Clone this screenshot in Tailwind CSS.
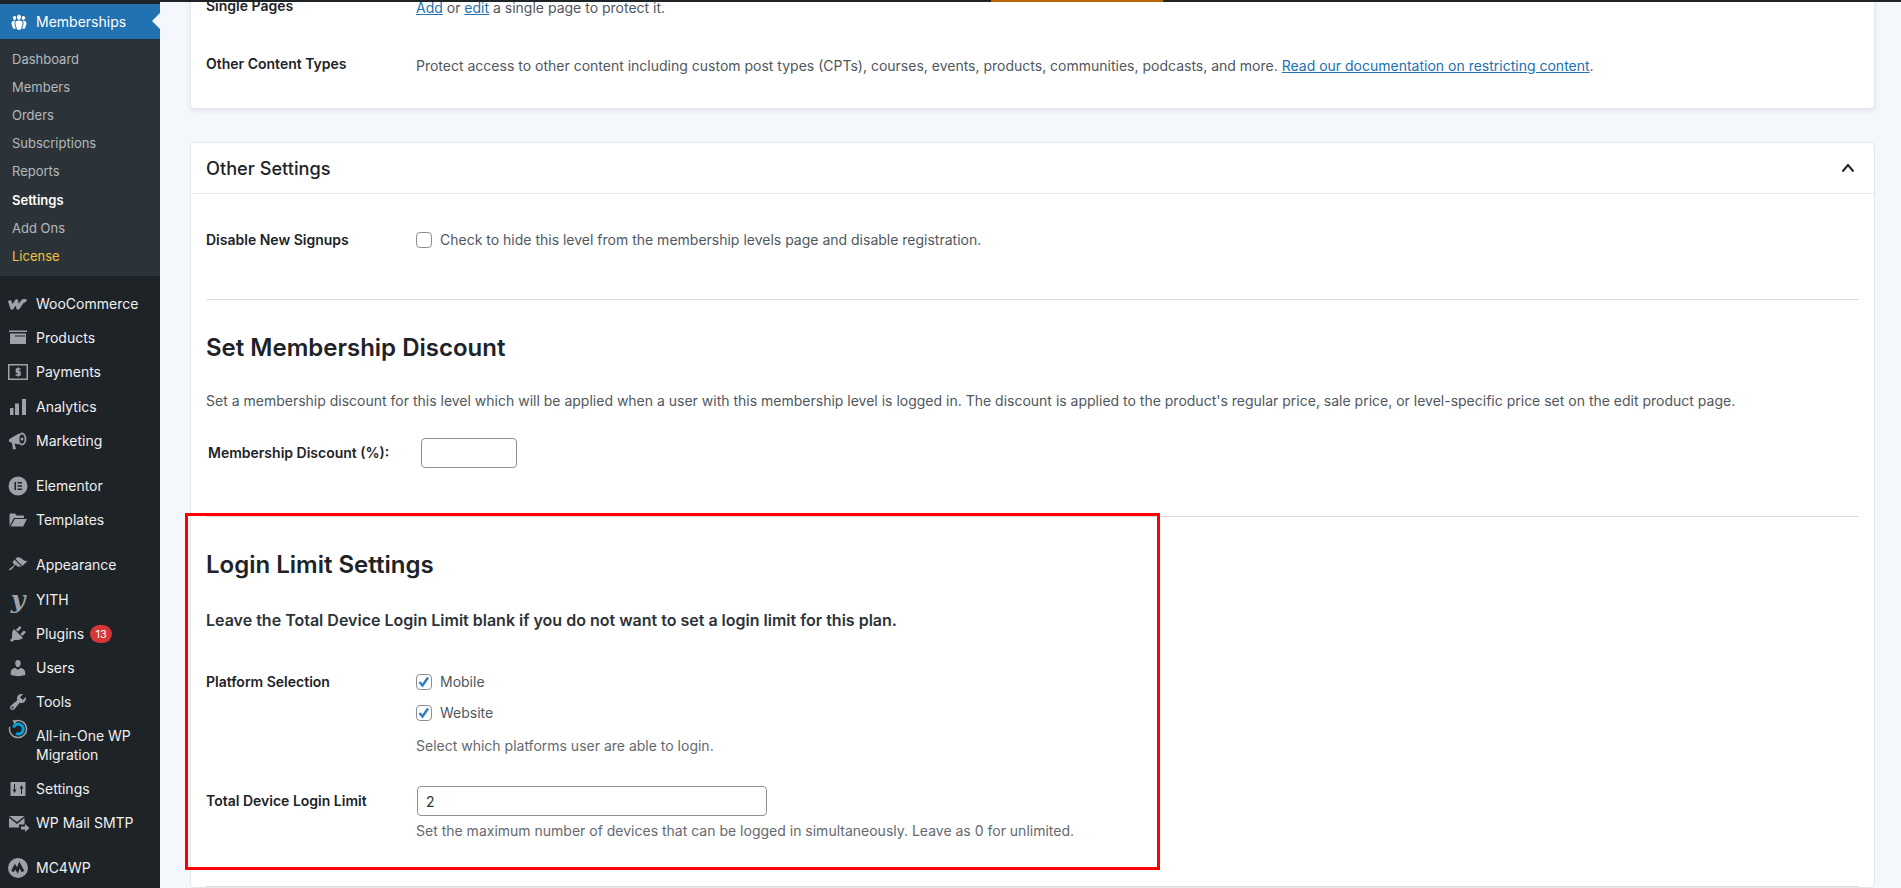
<!DOCTYPE html>
<html lang="en">

<head>
  <meta charset="UTF-8" />
  <meta name="viewport" content="width=device-width, initial-scale=1.0" />
  <script src="https://cdn.jsdelivr.net/npm/@tailwindcss/browser@4"></script>
  <title>Membership Level Settings</title>
</head>

<body class="relative h-[888px] overflow-hidden bg-[#f4f7fb] font-[Inter,sans-serif] text-[14px] leading-5 text-[#50575e]">
  <div class="flex h-[888px]">
    <!-- Admin menu -->
    <aside class="w-[160px] shrink-0 bg-[#1d2327] pt-1 text-[#f0f0f1]">
      <a class="relative flex h-[35px] items-center bg-[#2271b1] text-white">
        <span class="flex w-9 justify-center pl-[1px]">
          <svg class="h-[20px] w-[20px]" viewBox="0 0 20 20" fill="currentColor"><path d="M8.03 4.46c-.29 1.28.55 3.46 1.97 3.46 1.41 0 2.25-2.18 1.96-3.46-.22-.98-1.08-1.63-1.96-1.63-.89 0-1.74.65-1.97 1.63zm-4.13.9c-.25 1.08.47 2.93 1.67 2.93s1.92-1.85 1.67-2.93c-.19-.83-.92-1.39-1.67-1.39s-1.48.56-1.67 1.39zm8.86 0c-.25 1.08.47 2.93 1.66 2.93 1.2 0 1.92-1.85 1.67-2.93-.19-.83-.92-1.39-1.67-1.39-.74 0-1.47.56-1.66 1.39zm-.59 11.43l1.25-4.3C14.2 10 12.71 8.47 10 8.47c-2.72 0-4.21 1.53-3.44 4.02l1.26 4.3C8.05 17.51 9 18 10 18c.98 0 1.94-.49 2.17-1.21zm-6.1-7.63c-.49.67-.96 1.83-.42 3.59l1.12 3.79c-.34.2-.77.31-1.2.31-.85 0-1.65-.41-1.85-1.03l-1.07-3.65c-.65-2.11.61-3.4 2.92-3.4.27 0 .54.02.79.06-.1.1-.2.22-.29.33zm8.35-.39c2.31 0 3.58 1.29 2.92 3.4l-1.07 3.65c-.2.62-1 1.03-1.85 1.03-.43 0-.86-.11-1.2-.31l1.11-3.77c.55-1.78.08-2.94-.42-3.61-.08-.11-.18-.23-.28-.33.25-.04.51-.06.79-.06z"/></svg>
        </span>
        <span>Memberships</span>
        <span class="absolute right-0 top-[9px] h-0 w-0 border-y-[8px] border-r-[8px] border-y-transparent border-r-[#f4f7fb]"></span>
      </a>
      <ul class="bg-[#2c3338] py-[6px] text-[13px] text-[#b4b9be]">
        <li class="flex h-[28px] items-center pl-3">Dashboard</li>
        <li class="flex h-[28px] items-center pl-3">Members</li>
        <li class="flex h-[28px] items-center pl-3">Orders</li>
        <li class="flex h-[28px] items-center pl-3">Subscriptions</li>
        <li class="flex h-[28px] items-center pl-3">Reports</li>
        <li class="flex h-[29px] items-center pl-3 font-semibold text-white">Settings</li>
        <li class="flex h-[28px] items-center pl-3">Add Ons</li>
        <li class="flex h-[28px] items-center pl-3 text-[#f0c33c]">License</li>
      </ul>

      <ul class="mt-[11px] text-[#f0f0f1]">
        <li class="flex h-[34px] items-center">
          <span class="flex w-9 justify-center text-[#9ca2a7]">
            <svg class="h-[11px] w-[20px]" viewBox="0 0 20 11" fill="none" stroke="currentColor" stroke-width="3.400" stroke-linejoin="round"><path d="M1.500 1.500l2.500 7.500 4.500-7 1.500 7 4.500-6.500c1-1 2.500-1 3.500 0" /></svg>
          </span>
          <span>WooCommerce</span>
        </li>
        <li class="flex h-[34px] items-center">
          <span class="flex w-9 justify-center text-[#9ca2a7]">
            <svg class="h-[20px] w-[20px]" viewBox="0 0 20 20" fill="currentColor"><path d="M1 2.500h18v1.500H1zM2 5.500h16V16H2zm5 2v1h10V7.500z" fill-rule="evenodd" /></svg>
          </span>
          <span>Products</span>
        </li>
        <li class="flex h-[34px] items-center">
          <span class="flex w-9 justify-center text-[#9ca2a7]">
            <svg class="h-[20px] w-[20px]" viewBox="0 0 20 20" fill="none" stroke="currentColor"><rect x="0.750" y="2.750" width="18.500" height="14.500" stroke-width="1.500" /><path stroke-width="1.600" d="M12.500 7H8.500v3h3.500v3H7.500M10.200 5.500v9" /></svg>
          </span>
          <span>Payments</span>
        </li>
        <li class="flex h-[35px] items-center">
          <span class="flex w-9 justify-center text-[#9ca2a7]">
            <svg class="h-[20px] w-[20px]" viewBox="0 0 20 20" fill="currentColor"><path d="M2 11h3.500v7H2zM7 6.500h4V18H7zM14 2h4v16h-4z" /></svg>
          </span>
          <span>Analytics</span>
        </li>
        <li class="flex h-[34px] items-center">
          <span class="flex w-9 justify-center text-[#9ca2a7]">
            <svg class="h-[20px] w-[20px]" viewBox="0 0 20 20" fill="currentColor"><path d="M1 8.500L3 7l8-4.500v11L6.500 12.500 8 18l-3 .5-1-6.500-3-1.500z" /><ellipse cx="14" cy="8" rx="3.500" ry="5.500" fill="none" stroke="currentColor" stroke-width="1.800" /><circle cx="14" cy="8" r="1.500" /></svg>
          </span>
          <span>Marketing</span>
        </li>
      </ul>

      <ul class="mt-[11px]">
        <li class="flex h-[34px] items-center">
          <span class="flex w-9 justify-center text-[#9ca2a7]">
            <svg class="h-[20px] w-[20px]" viewBox="0 0 20 20" fill="currentColor"><path fill-rule="evenodd" d="M10 .5a9.500 9.500 0 1 1 0 19 9.500 9.500 0 0 1 0-19zM6.500 6v8H8V6zm3 0v1.500h4.500V6zm0 3.250v1.500h4.500v-1.500zm0 3.250V14h4.500v-1.500z" /></svg>
          </span>
          <span>Elementor</span>
        </li>
        <li class="flex h-[34px] items-center">
          <span class="flex w-9 justify-center text-[#9ca2a7]">
            <svg class="h-[20px] w-[20px]" viewBox="0 0 20 20" fill="currentColor"><path d="M1.500 16V4.500c0-.5.500-1 1-1h4.500l1.500 2H15c.5 0 1 .5 1 1V8H6L1.500 16z M6.800 9H19l-3.800 7.500H2.500z" /></svg>
          </span>
          <span>Templates</span>
        </li>
      </ul>

      <ul class="mt-[10px]">
        <li class="flex h-[35px] items-center">
          <span class="flex w-9 justify-center text-[#9ca2a7]">
            <svg class="h-[20px] w-[20px]" viewBox="0 0 20 20" fill="currentColor"><path d="M14.480 11.060L7.410 3.990l1.500-1.500c.5-.56 2.300-.47 3.510.32 1.210.8 1.430 1.280 2.910 2.100 1.180.64 2.450 1.260 4.450.85zm-.71.71L6.700 4.700 4.930 6.470c-.39.39-.39 1.020 0 1.410l1.060 1.060c.39.39.39 1.030 0 1.420-.6.6-1.430 1.110-2.210 1.690-.35.26-.7.53-1.010.84C1.430 13.230.65 14.440 1.270 15.060c.61.62 1.830-.16 3.170-1.500.3-.3.58-.65.84-1 .58-.78 1.090-1.610 1.690-2.210.39-.39 1.020-.39 1.410 0l1.060 1.060c.39.39 1.020.39 1.410 0z" /></svg>
          </span>
          <span>Appearance</span>
        </li>
        <li class="flex h-[35px] items-center">
          <span class="flex w-9 justify-center font-['DejaVu_Serif',serif] text-[25px] font-bold italic leading-none text-[#9ca2a7]">y</span>
          <span>YITH</span>
        </li>
        <li class="flex h-[34px] items-center">
          <span class="flex w-9 justify-center text-[#9ca2a7]">
            <svg class="h-[20px] w-[20px]" viewBox="0 0 20 20" fill="currentColor"><path d="M13.110 4.360L9.870 7.600 8 5.730l3.240-3.240c.35-.34 1.050-.2 1.560.32.52.51.66 1.210.31 1.550zm-8 1.770l.91-1.120 9.010 9.010-1.190.84c-.71.71-2.630 1.160-3.820 1.160H6.140L4.900 17.260c-.59.59-1.540.59-2.120 0-.59-.58-.59-1.530 0-2.120l1.240-1.240v-3.880c0-1.130.4-3.190 1.090-3.890zm7.260 3.970l3.240-3.240c.34-.35 1.040-.21 1.550.31.52.51.66 1.210.31 1.550l-3.240 3.250z" /></svg>
          </span>
          <span>Plugins</span>
          <span class="ml-[6px] flex h-[18px] min-w-[22px] items-center justify-center rounded-full bg-[#d63638] px-[5px] text-[11px] text-white">13</span>
        </li>
        <li class="flex h-[34px] items-center">
          <span class="flex w-9 justify-center text-[#9ca2a7]">
            <svg class="h-[20px] w-[20px]" viewBox="0 0 20 20" fill="currentColor"><path d="M10 9.250c-2.270 0-2.730-3.440-2.730-3.440C7 4.020 7.820 2 9.970 2c2.160 0 2.980 2.020 2.710 3.810 0 0-.41 3.440-2.680 3.440zm0 2.570L12.720 10c2.390 0 4.520 2.330 4.520 4.530v2.490s-3.650 1.130-7.240 1.130c-3.650 0-7.240-1.130-7.240-1.130v-2.490c0-2.250 1.940-4.480 4.470-4.480z" /></svg>
          </span>
          <span>Users</span>
        </li>
        <li class="flex h-[34px] items-center">
          <span class="flex w-9 justify-center text-[#9ca2a7]">
            <svg class="h-[20px] w-[20px]" viewBox="0 0 20 20" fill="currentColor"><path d="M16.680 9.770c-1.340 1.340-3.300 1.670-4.950.99l-5.410 6.520c-.99.99-2.590.99-3.580 0s-.99-2.590 0-3.570l6.520-5.420c-.68-1.650-.35-3.610.99-4.950 1.280-1.280 3.120-1.620 4.720-1.060l-2.890 2.890 2.820 2.820 2.860-2.870c.53 1.580.18 3.390-1.080 4.650zM3.810 16.210c.4.39 1.040.39 1.430 0 .4-.4.4-1.040 0-1.430-.39-.4-1.030-.4-1.430 0-.39.39-.39 1.030 0 1.430z" /></svg>
          </span>
          <span>Tools</span>
        </li>
        <li class="flex h-[53px] items-start pt-[7px]">
          <span class="flex w-9 justify-center -mt-[7px]">
            <svg class="h-[20px] w-[20px]" viewBox="0 0 20 20" fill="none"><path d="M7.500 2A8.500 8.500 0 1 1 1.800 8" stroke="#9ca2a7" stroke-width="1.500" /><path d="M4.500 1l4.500.5-2.500 4z" fill="#9ca2a7" /><path d="M5.500 8.500A5 5 0 1 1 8 14.500" stroke="#0a9fdb" stroke-width="3" /></svg>
          </span>
          <span class="leading-[19px]">All-in-One WP<br />Migration</span>
        </li>
        <li class="flex h-[34px] items-center">
          <span class="flex w-9 justify-center text-[#9ca2a7]">
            <svg class="h-[20px] w-[20px]" viewBox="0 0 20 20" fill="currentColor"><path fill-rule="evenodd" d="M2.500 3h15v14h-15zM7 5v5.500H8.500L6.500 14l-2-3.500H6V5zM14 15V9.500h1.500l-2-3.500-2 3.500H13V15z" /></svg>
          </span>
          <span>Settings</span>
        </li>
        <li class="flex h-[34px] items-center">
          <span class="flex w-9 justify-center pl-[2px] text-[#9ca2a7]">
            <svg class="h-[20px] w-[22px]" viewBox="0 0 22 20" fill="currentColor"><path d="M1 3h15.500L9 9zM1 4.800V14.500h10v-3h5.500V4.800L9 11zM13 13.500h4V11l4.500 4-4.500 4v-2.500h-4z" /></svg>
          </span>
          <span>WP Mail SMTP</span>
        </li>
      </ul>

      <ul class="mt-[11px]">
        <li class="flex h-[34px] items-center">
          <span class="flex w-9 justify-center text-[#9ca2a7]">
            <svg class="h-[20px] w-[20px]" viewBox="0 0 20 20"><circle cx="10" cy="10" r="10" fill="currentColor" /><path d="M4.500 13.500l2.500-5 2.500 4 2-5.500 3.500 6.500" fill="none" stroke="#1d2327" stroke-width="2.800" /></svg>
          </span>
          <span>MC4WP</span>
        </li>
      </ul>
    </aside>

    <!-- Page content -->
    <main class="min-w-0 flex-1 overflow-hidden pl-[30px] pr-[26px]">
      <section class="-mt-[4px] h-[113px] rounded-b-[4px] border border-t-0 border-[#e3e6ea] bg-white px-[15px] shadow-[0_2px_6px_rgba(0,0,0,0.08)]">
        <div class="flex">
          <div class="w-[210px] font-semibold text-[#1d2327]">Single Pages</div>
          <div class="pt-[2px]"><a class="text-[#2271b1] underline">Add</a> or <a class="text-[#2271b1] underline">edit</a> a single page to protect it.</div>
        </div>
        <div class="mt-[36px] flex">
          <div class="w-[210px] font-semibold text-[#1d2327]">Other Content Types</div>
          <div class="pt-[2px]">Protect access to other content including custom post types (CPTs), courses, events, products, communities, podcasts, and more. <a class="text-[#2271b1] underline">Read our documentation on restricting content</a>.</div>
        </div>
      </section>

      <section class="mt-[33px] rounded-[4px] border border-[#e3e6ea] bg-white">
        <div class="flex h-[51px] items-center justify-between border-b border-[#e3e6ea] pl-[15px] pr-[18px]">
          <h3 class="text-[18.2px] font-medium text-[#1d2327]">Other Settings</h3>
          <svg class="h-[14px] w-[16px]" viewBox="0 0 16 14" fill="none" stroke="#1d2327" stroke-width="2"><path d="M2.500 10.500L8 4l5.500 6.500" /></svg>
        </div>
        <div class="px-[15px]">
          <div class="mt-[38px] flex items-center">
            <div class="w-[210px] font-semibold leading-4 text-[#1d2327]">Disable New Signups</div>
            <span class="h-4 w-4 rounded-[4px] border border-[#8c8f94] bg-white"></span>
            <span class="ml-[8px] leading-4">Check to hide this level from the membership levels page and disable registration.</span>
          </div>

          <hr class="mt-[51px] border-[#dcdcde]" />

          <h2 class="mt-[33px] text-[24px] font-semibold leading-[30px] text-[#1d2327]">Set Membership Discount</h2>
          <p class="mt-[28px]">Set a membership discount for this level which will be applied when a user with this membership level is logged in. The discount is applied to the product's regular price, sale price, or level-specific price set on the edit product page.</p>
          <div class="mt-[27px] flex items-center pl-[2px]">
            <label class="w-[213px] font-semibold text-[#1d2327]">Membership Discount (%):</label>
            <input type="text" class="h-[30px] w-[96px] rounded-[4px] border border-[#8c8f94] bg-white" />
          </div>

          <hr class="mt-[48px] border-[#dcdcde]" />

          <h2 class="mt-[33px] text-[24px] font-semibold leading-[30px] text-[#1d2327]">Login Limit Settings</h2>
          <p class="mt-[30px] text-[16px] font-semibold text-[#2c3338]">Leave the Total Device Login Limit blank if you do not want to set a login limit for this plan.</p>

          <div class="mt-[44px] flex">
            <div class="w-[210px] font-semibold leading-4 text-[#1d2327]">Platform Selection</div>
            <div>
              <label class="flex items-center leading-4">
                <span class="h-4 w-4 rounded-[4px] border border-[#8c8f94] bg-white text-[#2f7fc4]">
                  <svg class="h-[14px] w-[14px]" viewBox="0 0 14 14" fill="none" stroke="currentColor" stroke-width="2.500"><path d="M2.500 7l3 3.500 5.500-8" /></svg>
                </span>
                <span class="ml-[8px]">Mobile</span>
              </label>
              <label class="mt-[15px] flex items-center leading-4">
                <span class="h-4 w-4 rounded-[4px] border border-[#8c8f94] bg-white text-[#2f7fc4]">
                  <svg class="h-[14px] w-[14px]" viewBox="0 0 14 14" fill="none" stroke="currentColor" stroke-width="2.500"><path d="M2.500 7l3 3.500 5.500-8" /></svg>
                </span>
                <span class="ml-[8px]">Website</span>
              </label>
              <p class="mt-[15px] text-[#646970]">Select which platforms user are able to login.</p>
            </div>
          </div>

          <div class="mt-[30px] flex items-center">
            <label class="w-[211px] font-semibold text-[#1d2327]">Total Device Login Limit</label>
            <input type="text" value="2" class="h-[30px] w-[350px] rounded-[4px] border border-[#8c8f94] bg-white px-2 text-[#2c3338]" />
          </div>
          <p class="mt-[5px] pl-[210px] text-[#646970]">Set the maximum number of devices that can be logged in simultaneously. Leave as 0 for unlimited.</p>

          <hr class="mt-[45px] border-[#dcdcde]" />
        </div>
      </section>
    </main>
  </div>

  <!-- Top edge of the admin bar -->
  <div class="absolute left-0 top-0 flex h-[2px] w-full bg-[#1d2327]">
    <div class="ml-[991px] w-[172px] bg-[#b86500]"></div>
  </div>
  <!-- Red highlight round the login limit block -->
  <div class="absolute left-[185px] top-[513px] h-[357px] w-[975px] border-[3px] border-[#ff0000]"></div>
</body>

</html>
